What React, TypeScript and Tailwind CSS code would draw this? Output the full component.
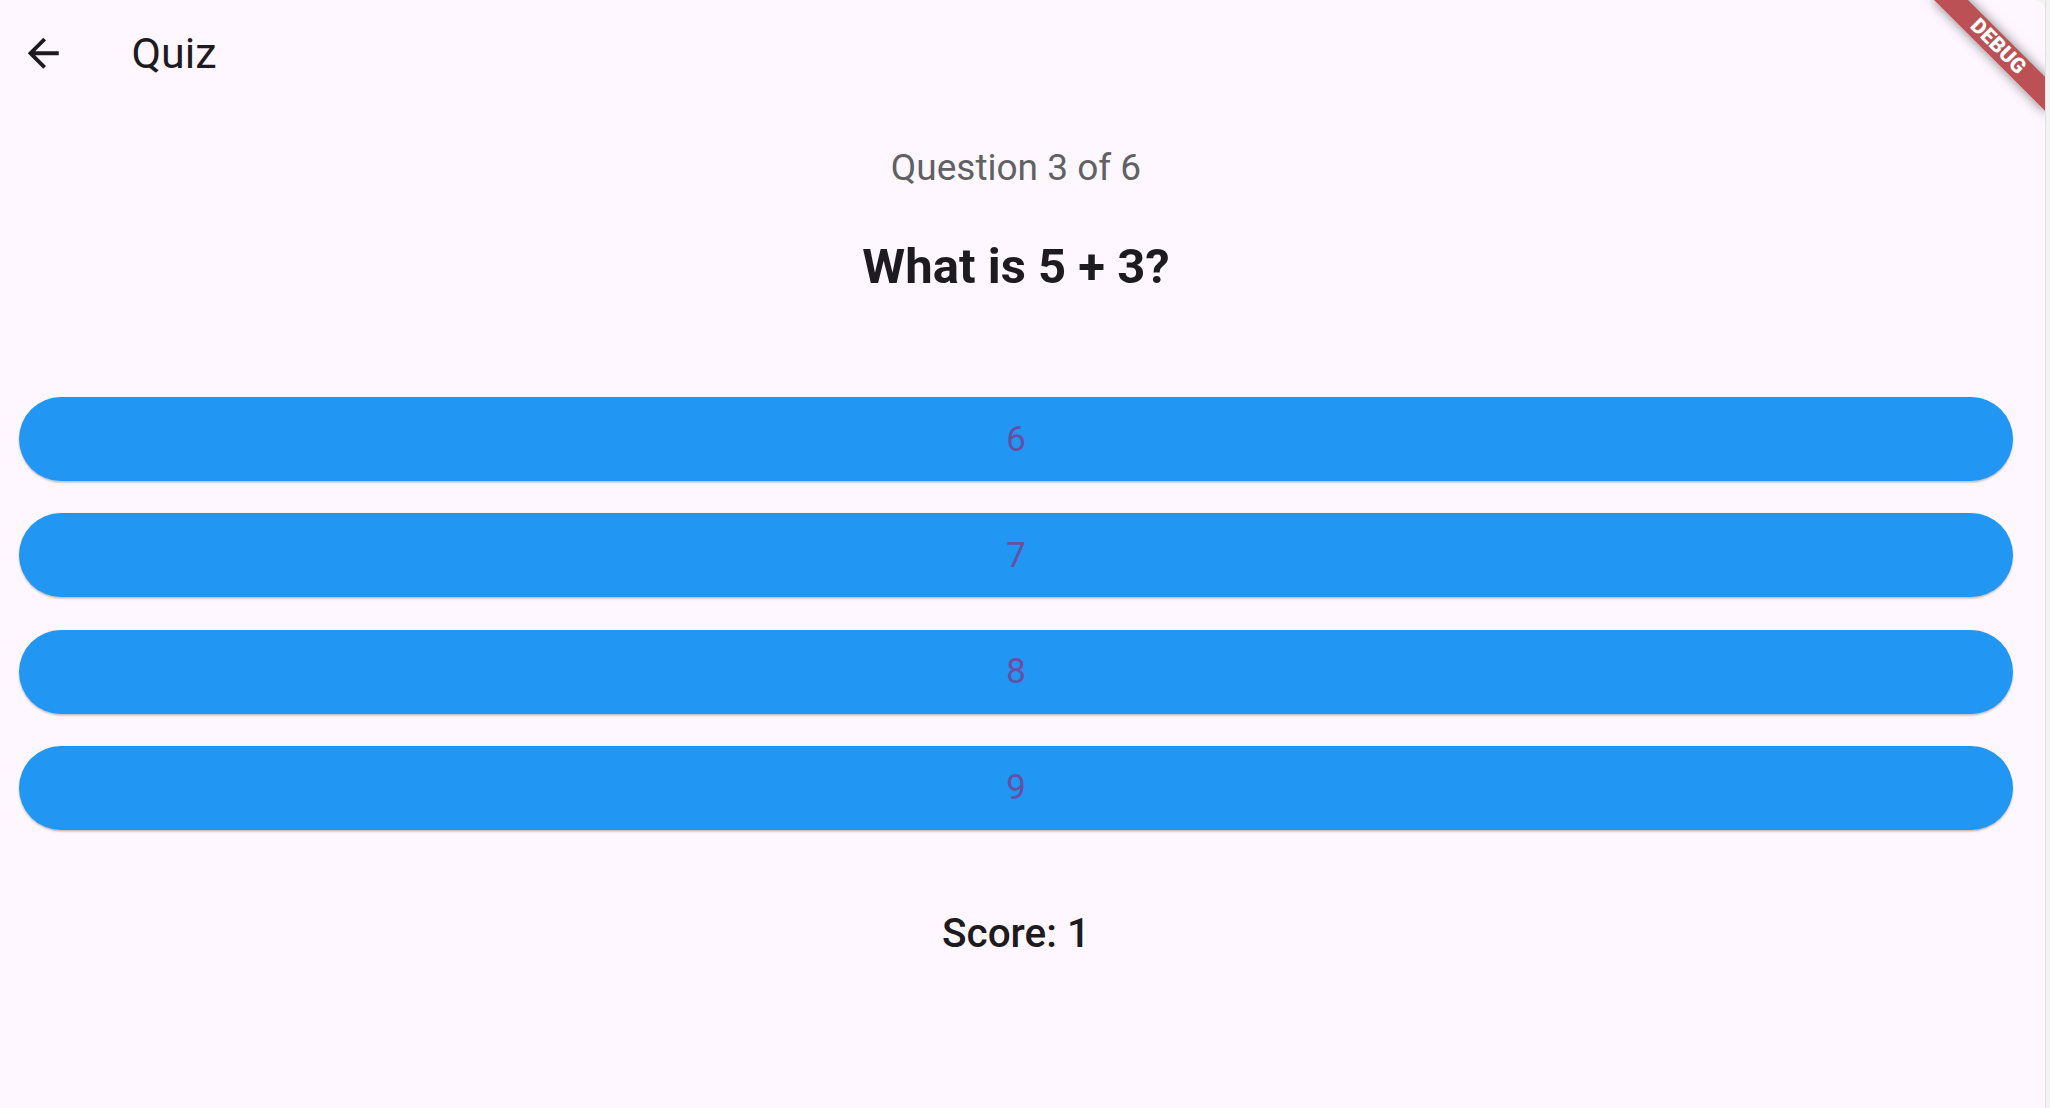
import React from "react";

function ArrowBack() {
  return (
    <svg width="46.5" height="46.5" viewBox="0 0 24 24" fill="#1d1b20">
      <path d="M20 11H7.83l5.59-5.59L12 4l-8 8 8 8 1.41-1.41L7.83 13H20v-2z" />
    </svg>
  );
}

export default function App() {
  const answers = ["6", "7", "8", "9"];
  return (
    <div
      className="flex h-[1108px] w-[2050px] overflow-hidden bg-[#f3f3f3]"
      style={{ fontFamily: "Roboto, 'Noto Sans', sans-serif" }}
    >
      <div className="relative flex h-full w-[2045px] shrink-0 overflow-hidden rounded-tr-[10px] bg-[#fef7ff]">
        <div className="flex w-[2032px] shrink-0 flex-col">
          <div className="flex h-[107px] items-center">
            <div className="ml-[20px] flex h-[46.5px] w-[46.5px] items-center justify-center">
              <ArrowBack />
            </div>
            <div className="ml-[65px] text-[43px] leading-none text-[#1d1b20]">Quiz</div>
          </div>
          <div className="mt-[42px] text-center text-[37px] leading-none text-[#616161]">
            Question 3 of 6
          </div>
          <div className="mt-[56px] text-center text-[49px] font-bold leading-none text-[#1d1b20]">
            What is 5 + 3?
          </div>
          <div className="mt-[106px] flex flex-col gap-[32.3px] px-[19px]">
            {answers.map((a) => (
              <div
                key={a}
                className="flex h-[84px] items-center justify-center rounded-full bg-[#2196f3] text-[35px] leading-none text-[#6750a4] shadow-[0_1.5px_2px_rgba(0,0,0,0.25)]"
              >
                {a}
              </div>
            ))}
          </div>
          <div className="mt-[83px] text-center text-[40.5px] font-medium leading-none text-[#1d1b20]">
            Score: 1
          </div>
        </div>
        <div
          className="absolute flex h-[23.6px] w-[158px] items-center justify-center bg-[rgba(170,38,42,0.8)] shadow-[0_0_12px_rgba(0,0,0,0.5)]"
          style={{ left: 1998 - 79, top: 47 - 11.8, transform: "rotate(45deg)" }}
        >
          <span className="text-[21px] font-black leading-none tracking-[0.3px] text-white">DEBUG</span>
        </div>
      </div>
      <div className="h-full flex-1 border-l border-[#e2e2e2] bg-[#f3f3f3]" />
    </div>
  );
}
